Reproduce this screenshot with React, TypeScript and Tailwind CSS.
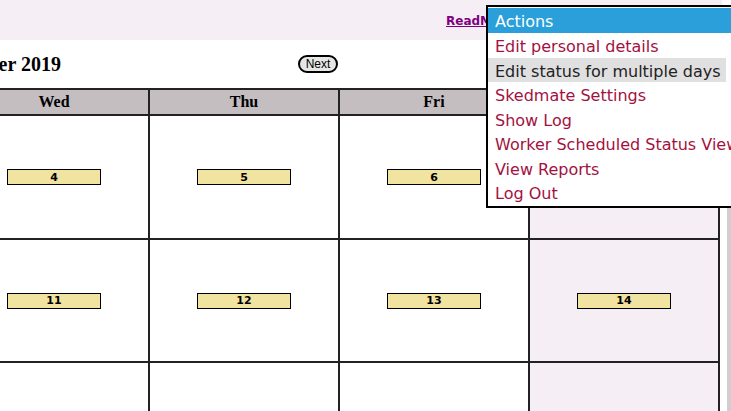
import React from 'react';

const days = ['Sun', 'Mon', 'Tue', 'Wed', 'Thu', 'Fri', 'Sat'];

const weeks: (number | null)[][] = [
    [1, 2, 3, 4, 5, 6, 7],
    [8, 9, 10, 11, 12, 13, 14],
    [15, 16, 17, 18, 19, 20, 21],
];

const menuItems = [
    'Edit personal details',
    'Edit status for multiple days',
    'Skedmate Settings',
    'Show Log',
    'Worker Scheduled Status View',
    'View Reports',
    'Log Out',
];

const DayBadge: React.FC<{ day: number }> = ({ day }) => (
    <div className="w-[94px] h-[16px] bg-[#f0e4a0] border border-black flex items-center justify-center text-[11px] font-bold leading-none font-['DejaVu_Sans',sans-serif] text-black">
        {day}
    </div>
);

const ActionsMenu: React.FC = () => (
    <div className="absolute left-[486px] top-[5px] w-[270px] bg-white border-2 border-black pt-[1px] pb-[1px] font-['Comic_Sans_MS','DejaVu_Sans',cursive] text-[16px]">
        <div className="h-[25px] bg-[#2a9fd9] text-white flex items-center pl-[7px] pt-[3px]">Actions</div>
        {menuItems.map((item, i) => (
            <div
                key={item}
                className={
                    i === 1
                        ? 'h-[24.5px] w-[238px] bg-[#e0e0e0] text-[#222] flex items-center pl-[7px] pt-[4px] whitespace-nowrap'
                        : 'h-[24.5px] text-[#a3113f] flex items-center pl-[7px] pt-[4px] whitespace-nowrap'
                }
            >
                {item}
            </div>
        ))}
    </div>
);

export default function App() {
    return (
        <div className="relative w-[731px] h-[411px] overflow-hidden bg-white">
            <div className="flex h-full">
                <div className="w-[722px] shrink-0">
                    <div className="h-[40px] bg-[#f5eff5] flex items-start pl-[446px] pt-[12px]">
                        <a className="text-[12px] font-bold underline text-[#800080] font-['DejaVu_Sans',sans-serif] whitespace-nowrap">
                            ReadMe
                        </a>
                    </div>
                    <div className="ml-[-612px]">
                        <div className="h-[48px] flex items-center">
                            <div className="w-[673px] text-right font-['Liberation_Serif',serif] font-bold text-[20px] whitespace-nowrap">
                                September 2019
                            </div>
                            <button className="ml-[237px] w-[40px] h-[18px] rounded-full border-2 border-black bg-[#e6e6e6] text-[12px] leading-none font-['Liberation_Sans',sans-serif] flex items-center justify-center pb-[1px]">
                                Next
                            </button>
                        </div>
                        <div className="w-[1334px] border-t-2 border-l-2 border-[#222]">
                            <div className="grid grid-cols-[repeat(7,190px)] h-[26px] bg-[#c4bec0]">
                                {days.map((d) => (
                                    <div
                                        key={d}
                                        className="border-r-2 border-b-2 border-[#222] flex items-center justify-center font-['Liberation_Serif',serif] font-bold text-[16px]"
                                    >
                                        {d}
                                    </div>
                                ))}
                            </div>
                            {weeks.map((week, wi) => (
                                <div
                                    key={wi}
                                    className={
                                        wi === 1
                                            ? 'grid grid-cols-[repeat(7,190px)] h-[123px]'
                                            : 'grid grid-cols-[repeat(7,190px)] h-[124px]'
                                    }
                                >
                                    {week.map((day, di) => (
                                        <div
                                            key={di}
                                            className={
                                                di === 6
                                                    ? 'border-r-2 border-b-2 border-[#222] bg-[#f5eff5] flex items-center justify-center'
                                                    : 'border-r-2 border-b-2 border-[#222] flex items-center justify-center'
                                            }
                                        >
                                            {day !== null && (wi < 2 && (di < 6 || wi === 1)) ? <DayBadge day={day} /> : null}
                                        </div>
                                    ))}
                                </div>
                            ))}
                        </div>
                    </div>
                </div>
                <div className="w-[5px] shrink-0" />
                <div className="w-[4px] shrink-0 mt-[40px] bg-[#cfcfcf]" />
            </div>
            <ActionsMenu />
        </div>
    );
}
